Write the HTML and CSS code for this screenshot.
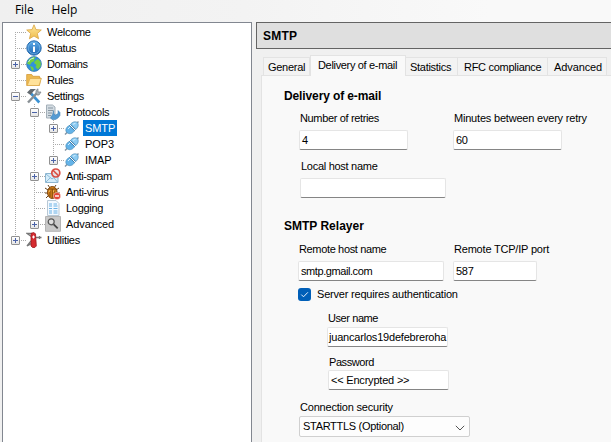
FILE: index.html
```html
<!DOCTYPE html>
<html lang="en">
<head>
<meta charset="utf-8">
<title>Mail server administrator</title>
<link rel="stylesheet" href="styles.css">
</head>
<body>
<svg class="defs" width="0" height="0" aria-hidden="true">
  <defs>
    <linearGradient id="blue" x1="0" y1="0" x2="0" y2="1"><stop offset="0" stop-color="#5aa9e6"/><stop offset="1" stop-color="#2268b4"/></linearGradient>
    <linearGradient id="gold" x1="0" y1="0" x2="0" y2="1"><stop offset="0" stop-color="#ffe9a0"/><stop offset="1" stop-color="#efbd4a"/></linearGradient>
    <symbol id="plug" viewBox="0 0 16 16">
      <path d="M1 14.500l3-3M12 4l2.500-2.500" stroke="#8496a5" stroke-width="1.500"/>
      <path d="M2.200 11.800C1 9 3 6.500 5.500 5.500l5 5C9.500 13 6 14.500 3.800 13.200z" fill="#64b3e8" stroke="#4b8db8" stroke-width=".7"/>
      <path d="M6.500 4.500C8 2 11 1 13.500 2.500 15 5 14 8 11.500 9.500z" fill="#8ccbf2" stroke="#4b8db8" stroke-width=".7"/>
      <path d="M5.300 5.300l5.400 5.400M6.500 4.300l5.200 5.200" stroke="#3b7ba8" stroke-width=".9"/>
      <path d="M4 9l2-2M9 4.300l2.500-1" stroke="#d5f0ff"/>
    </symbol>
  </defs>
</svg>
<nav class="menu"><span class="file">File</span><span>Help</span></nav>
<main class="window">
  <ul class="tree">
    <li class="row"><i class="cell half-bottom"></i><svg class="icon" viewBox="0 0 16 16"><path d="M8 .8l2 4.800 5.300.4-4 3.500 1.300 5.300L8 12l-4.600 2.800 1.300-5.300-4-3.500L6 5.600z" fill="url(#gold)" stroke="#d9a441" stroke-width=".8"/></svg><span class="name">Welcome</span></li>
    <li class="row"><i class="cell full"></i><svg class="icon" viewBox="0 0 16 16"><circle cx="8" cy="8" r="7.200" fill="url(#blue)" stroke="#2c6eaf"/><circle cx="8" cy="8" r="5.800" fill="none" stroke="#73b4e8" stroke-width=".7"/><path d="M8 3v2M8 6.500V12" stroke="#fff" stroke-width="2"/></svg><span class="name tight">Status</span></li>
    <li class="row"><i class="cell full"><b class="box plus"></b></i><svg class="icon" viewBox="0 0 16 16"><circle cx="8" cy="8" r="7.400" fill="#2f91dc" stroke="#3378b0" stroke-width=".8"/><path d="M3 3.500L7 1l3 .5-2 2 .5 1.500-3 1.500L4 9 1 7.500zM9 5l3-2 2.700 3v4L12 13.500 9.500 11l1-2L8 7zM4 10l3 1 1 3-2 .8z" fill="#70ce43"/><path d="M2.500 6A6 6 0 0 1 8 2" stroke="#c6f5dc" fill="none"/></svg><span class="name tighter">Domains</span></li>
    <li class="row"><i class="cell full"></i><svg class="icon" viewBox="0 0 16 16"><path d="M.7 13.500v-11h5l1.200 1.800h6.600V6H15l-1.600 7.500z" fill="#edb94f" stroke="#d49b38" stroke-width=".8"/><path d="M1.300 13.500L4 6.500h11.300L13 13.500z" fill="#ffe29a" stroke="#dda94a" stroke-width=".7"/></svg><span class="name tight">Rules</span></li>
    <li class="row"><i class="cell full"><b class="box minus"></b></i><svg class="icon" viewBox="0 0 16 16"><path d="M13.300 14.500L5 5.500" stroke="#3a92d4" stroke-width="2.600"/><path d="M1 4.500L4.500 1H10L7.500 3.200 4.500 7z" fill="#646b70"/><path d="M2 14.500L11 5" stroke="#888f94" stroke-width="2.400"/><path d="M10 5V2.500L12 .8V4h3l-2 3h-2z" fill="#aeb5ba" stroke="#777e83" stroke-width=".7"/></svg><span class="name tight">Settings</span></li>
    <li class="row"><i class="cell full"></i><i class="cell full"><b class="box minus"></b></i><svg class="icon" viewBox="0 0 16 16"><path d="M1.500 1h6l2.500 2v11H1.500z" fill="#d4dce2" stroke="#a3afb8"/><path d="M3 4h5M3 6.500h5M3 9h4M3 11.500h3" stroke="#8796a2"/><path d="M8.500 6.500v3l2 1.500 2.500-1.500V6.500l2 2v3l-2 2.500-2.500 1.500H7L5.500 14l1-2 1-1z" fill="#559bd3" stroke="#397caf" stroke-width=".5"/></svg><span class="name">Protocols</span></li>
    <li class="row"><i class="cell full"></i><i class="cell full"></i><i class="cell full"><b class="box plus"></b></i><svg class="icon"><use href="#plug"/></svg><span class="name selected">SMTP</span></li>
    <li class="row"><i class="cell full"></i><i class="cell full"></i><i class="cell full"></i><svg class="icon"><use href="#plug"/></svg><span class="name wide">POP3</span></li>
    <li class="row"><i class="cell full"></i><i class="cell full"></i><i class="cell half-top"><b class="box plus"></b></i><svg class="icon"><use href="#plug"/></svg><span class="name wide">IMAP</span></li>
    <li class="row"><i class="cell full"></i><i class="cell full"><b class="box plus"></b></i><svg class="icon" viewBox="0 0 16 16"><path d="M.5 5.500h12.500v9H.5z" fill="#d5edfa" stroke="#8cb5d0"/><path d="M1 6l6 5 6-5M1 14l4.500-4.500M12.500 14L9 10" fill="none" stroke="#8ebad7"/><circle cx="10.800" cy="5" r="4" fill="#eedede" fill-opacity=".8" stroke="#d94e43" stroke-width="1.700"/><path d="M8 2.300l5.500 5.500" stroke="#d94e43" stroke-width="1.600"/></svg><span class="name tighter">Anti-spam</span></li>
    <li class="row"><i class="cell full"></i><i class="cell full"></i><svg class="icon" viewBox="0 0 16 16"><path d="M3 1l2 3M11 1L9 4M0 4l3 2M0 9h3M1 14l3-3M14 4l-3 2M15 9h-4" stroke="#684017"/><ellipse cx="7.300" cy="8.500" rx="4.800" ry="6" fill="#d68219" stroke="#794009"/><path d="M3.300 5h8M7.300 5v9M5 6v7M9.700 6v7" stroke="#79440c" stroke-width=".9"/><path d="M4 8l1-2M8.500 8l.5-2" stroke="#ffc45b"/><circle cx="12" cy="12" r="3.600" fill="#e24637" stroke="#fff" stroke-width=".4"/><path d="M10 12h4" stroke="#fff" stroke-width="1.400"/></svg><span class="name tight">Anti-virus</span></li>
    <li class="row"><i class="cell full"></i><i class="cell full"></i><svg class="icon" viewBox="0 0 16 16"><path d="M2.500.5h8.500l3 3v12H2.500z" fill="#f3f9ff" stroke="#b8c8d5"/><path d="M4 4h3M8.500 4H12M4 6h3M8.500 6h4M4 8.500h3M8.500 8.500h4M4 11h3M8.500 11h4M4 13h3M8.500 13h4" stroke="#69b1e5"/></svg><span class="name">Logging</span></li>
    <li class="row"><i class="cell full"></i><i class="cell half-top"><b class="box plus"></b></i><svg class="icon" viewBox="0 0 16 16"><path d="M.5.5h15v14.800H.5z" fill="#c9c9c9" stroke="#b4b4b4"/><circle cx="6.200" cy="5.800" r="3" fill="#ddd" stroke="#555" stroke-width="1.200"/><path d="M8.700 8.300l4 4" stroke="#444" stroke-width="1.800"/></svg><span class="name wide">Advanced</span></li>
    <li class="row"><i class="cell half-top"><b class="box plus"></b></i><svg class="icon" viewBox="0 0 16 16"><path d="M9 5.500h6.500M13.500 4v3M6 5L1 1.500h5M5 9l-4 5 2-1 3-2" fill="none" stroke="#777" stroke-width="1.300"/><path d="M5 1.500l2.500-1L9.500 1.800l.8 12.200-1.500 1.500H6.500L5 14z" fill="#d52b30" stroke="#9d171d" stroke-width=".8"/><path d="M7.500 3.500v3M6 5h3" stroke="#fff"/></svg><span class="name">Utilities</span></li>
  </ul>
  <section class="content">
    <h1>SMTP</h1>
    <div class="tabs">
      <span class="tab general">General</span><span class="tab active">Delivery of e-mail</span><span class="tab statistics">Statistics</span><span class="tab rfc">RFC compliance</span><span class="tab advanced">Advanced</span>
    </div>
    <form class="page">
      <h2>Delivery of e-mail</h2>
      <div class="pair retries">
        <label class="field"><span class="caption tight">Number of retries</span><span class="input medium">4</span></label>
        <label class="field"><span class="caption loose">Minutes between every retry</span><span class="input medium">60</span></label>
      </div>
      <label class="field local"><span class="caption">Local host name</span><span class="input long"></span></label>
      <h2 class="relayer">SMTP Relayer</h2>
      <div class="pair remote">
        <label class="field"><span class="caption tight">Remote host name</span><span class="input long tighter">smtp.gmail.com</span></label>
        <label class="field"><span class="caption loose">Remote TCP/IP port</span><span class="input short">587</span></label>
      </div>
      <label class="auth"><span class="check"><svg width="13" height="13" viewBox="0 0 13 13"><path d="M3.300 6.600l2.200 2.200 4.400-4.500" fill="none" stroke="#e8f3ff"/></svg></span><span class="loose">Server requires authentication</span></label>
      <label class="field user"><span class="caption tighter">User name</span><span class="input login account">juancarlos19defebreroha</span></label>
      <label class="field password"><span class="caption tighter">Password</span><span class="input login loose">&lt;&lt; Encrypted &gt;&gt;</span></label>
      <label class="field security"><span class="caption loose">Connection security</span><span class="select"><span class="value">STARTTLS (Optional)</span><svg width="10" height="6" viewBox="0 0 10 6"><path d="M.8.8L5 5 9.200.8" fill="none" stroke="#555"/></svg></span></label>
    </form>
  </section>
</main>
</body>
</html>
```
FILE: styles.css
```css
* { box-sizing: border-box; }
body {
  margin: 0;
  width: 611px;
  height: 442px;
  overflow: hidden;
  background: #f0f0f0;
  color: #000;
  font: 11px/16px "Liberation Sans", Arial, sans-serif;
  letter-spacing: -.28px;
}
.defs { display: block; }
.menu {
  display: flex;
  gap: 18px;
  height: 22px;
  padding: 2px 0 0 15px;
  background: linear-gradient(90deg, #f0f0f0, #f3f3f3 40%, #f9f9f9 80%);
  font: 12px/16px "Open Sans", sans-serif;
  letter-spacing: -.1px;
}
.window { display: flex; height: 420px; padding-left: 2px; }
.tree {
  flex: none;
  width: 250px;
  height: 430px;
  margin: 0 4px 0 0;
  padding: 1px 0 0 3px;
  background: #fff;
  border: 1px solid #828790;
  list-style: none;
}
.row { display: flex; height: 16px; }
.cell {
  position: relative;
  flex: none;
  width: 19px;
  height: 16px;
  background: repeating-linear-gradient(#aaa 0 1px, transparent 1px 2px) 9px 0 / 1px 16px no-repeat;
}
.cell.half-top { background-size: 1px 8px; }
.cell.half-bottom { background-position: 9px 8px; background-size: 1px 8px; }
.cell:nth-last-of-type(1)::after {
  content: "";
  position: absolute;
  left: 11px;
  top: 8px;
  width: 9px;
  height: 1px;
  background: repeating-linear-gradient(90deg, #aaa 0 1px, transparent 1px 2px);
}
.box {
  position: absolute;
  z-index: 1;
  left: 5px;
  top: 4px;
  width: 9px;
  height: 9px;
  border: 1px solid #919191;
  border-radius: 1px;
  background: linear-gradient(90deg, #4b63a7, #4b63a7) 1px 3px / 5px 1px no-repeat, linear-gradient(#fff, #e5e5e5);
}
.plus { background: linear-gradient(#4b63a7, #4b63a7) 1px 3px / 5px 1px no-repeat, linear-gradient(#4b63a7, #4b63a7) 3px 1px / 1px 5px no-repeat, linear-gradient(#fff, #e5e5e5); }
.icon { flex: none; width: 16px; height: 16px; margin-left: 1px; }
.name { height: 16px; margin-left: 3px; padding: 0 2px; white-space: nowrap; }
.selected { background: #0078d7; color: #fff; letter-spacing: -.1px; }
.tight { letter-spacing: -.35px; }
.tighter { letter-spacing: -.42px; }
.loose { letter-spacing: -.2px; }
.wide { letter-spacing: -.1px; }
.content { flex: 1; min-width: 0; }
h1, h2 { margin: 0; font-size: 12px; font-weight: bold; line-height: 16px; letter-spacing: 0; }
h1 {
  height: 27px;
  padding: 5px 0 0 6px;
  background: #dfdfdf;
  border: 1px solid #646464;
  border-right: 0;
  letter-spacing: .2px;
}
.tabs { display: flex; align-items: flex-end; height: 26px; padding-left: 7px; }
.tab {
  height: 18px;
  padding: 1px 0 0 5px;
  background: #f3f3f3;
  border: 1px solid #e3e3e3;
  border-width: 1px 1px 0 0;
  white-space: nowrap;
}
.general { width: 47px; border-left-width: 1px; padding-left: 4px; }
.active {
  position: relative;
  width: 96px;
  height: 21px;
  padding-left: 7px;
  border-left-width: 1px;
  background: #f9f9f9;
  margin-bottom: -1px;
  letter-spacing: -.33px;
}
.statistics { width: 52px; padding-left: 4px; }
.rfc { width: 90px; padding-left: 6px; }
.advanced { width: 59px; padding-left: 6px; letter-spacing: -.1px; }
.page {
  width: 360px;
  height: 380px;
  margin-left: 5px;
  padding: 12px 0 0 22px;
  background: #f9f9f9;
  border: 1px solid #e3e3e3;
  border-right: 0;
}
.page h2 { letter-spacing: -.12px; }
.page h2.relayer { margin-top: 20px; letter-spacing: 0; }
.field { display: block; }
.caption { display: block; height: 16px; padding-left: 1px; white-space: nowrap; }
.pair { display: flex; }
.retries { margin: 6px 0 0 15px; gap: 45px; }
.local { margin: 8px 0 0 16px; }
.remote { margin: 7px 0 0 14px; gap: 9px; }
.input {
  display: block;
  height: 20px;
  margin-top: 4px;
  padding: 1px 2px 0;
  overflow: hidden;
  background: #fff;
  border: 1px solid #e5e5e5;
  border-bottom-color: #858585;
  border-radius: 2px;
  white-space: nowrap;
}
.medium { width: 109px; }
.long { width: 146px; }
.short { width: 84px; }
.login { width: 121px; }
.account { padding-left: 1px; letter-spacing: -.2px; }
.auth { display: flex; gap: 6px; height: 16px; margin: 6px 0 0 14px; }
.check { width: 13px; height: 13px; margin-top: 1px; background: #005fb8; border-radius: 3px; }
.check svg { display: block; }
.auth .loose { line-height: 14px; }
.user { margin: 7px 0 0 43px; }
.user .input { margin-top: 1px; }
.password { margin: 7px 0 0 44px; }
.password .input { margin-top: 0; }
.security { margin: 9px 0 0 15px; }
.select {
  display: flex;
  justify-content: space-between;
  width: 171px;
  height: 21px;
  margin-top: 1px;
  padding: 1px 4px 0 3px;
  background: #fdfdfd;
  border: 1px solid #d0d0d0;
  border-radius: 2px;
}
.select svg { margin-top: 7px; }
.value { letter-spacing: -.3px; }
```
